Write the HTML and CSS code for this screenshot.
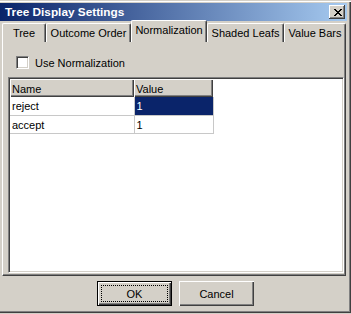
FILE: index.html
```html
<!DOCTYPE html>
<html>
<head>
<meta charset="utf-8">
<link rel="stylesheet" href="styles.css">
</head>
<body>
<div class="window">
  <div class="titlebar">
    <span class="title">Tree Display Settings</span>
    <div class="close">
      <svg width="8" height="7" viewBox="0 0 8 7" shape-rendering="crispEdges">
        <rect x="0" y="0" width="2" height="1" fill="#000"/>
        <rect x="6" y="0" width="2" height="1" fill="#000"/>
        <rect x="1" y="1" width="2" height="1" fill="#000"/>
        <rect x="5" y="1" width="2" height="1" fill="#000"/>
        <rect x="2" y="2" width="4" height="1" fill="#000"/>
        <rect x="3" y="3" width="2" height="1" fill="#000"/>
        <rect x="2" y="4" width="4" height="1" fill="#000"/>
        <rect x="1" y="5" width="2" height="1" fill="#000"/>
        <rect x="5" y="5" width="2" height="1" fill="#000"/>
        <rect x="0" y="6" width="2" height="1" fill="#000"/>
        <rect x="6" y="6" width="2" height="1" fill="#000"/>
      </svg>
    </div>
  </div>
  <div class="main">
    <div class="tabs">
      <div class="tab t-tree">Tree</div>
      <div class="tab t-outcome">Outcome Order</div>
      <div class="tab t-norm active">Normalization</div>
      <div class="tab t-shaded">Shaded Leafs</div>
      <div class="tab t-value">Value Bars</div>
    </div>
    <div class="panel">
      <div class="check"><span class="box"></span><span class="label">Use Normalization</span></div>
      <div class="scroll">
        <table class="grid">
          <colgroup><col class="c-name"><col class="c-value"></colgroup>
          <thead>
            <tr><th>Name</th><th>Value</th></tr>
          </thead>
          <tbody>
            <tr><td>reject</td><td class="sel">1</td></tr>
            <tr><td>accept</td><td>1</td></tr>
          </tbody>
        </table>
      </div>
    </div>
    <div class="buttons">
      <div class="btn default"><span class="focus">OK</span></div>
      <div class="btn">Cancel</div>
    </div>
  </div>
</div>
</body>
</html>
```
FILE: styles.css
```css
* { box-sizing: border-box; }
html, body { margin: 0; padding: 0; }
body {
  background: #d4d0c8;
  font-family: "Liberation Sans", Arial, sans-serif;
  font-size: 11px;
  color: #000;
  width: 351px;
  height: 314px;
  overflow: hidden;
}
.window {
  width: 351px;
  height: 313px;
  padding: 3px 4px 2px 0;
  display: flex;
  flex-direction: column;
  box-shadow: inset 0 1px #d4d0c8, inset 0 2px #ffffff, inset -1px -1px #404040, inset -2px -2px #808080;
}
.titlebar {
  height: 18px;
  flex: none;
  background: linear-gradient(to right, #0a246a, #a6caf0);
  display: flex;
  align-items: center;
  justify-content: space-between;
  padding: 0 2px 0 5px;
}
.title {
  color: #fff;
  font-weight: bold;
  font-size: 11.8px;
}
.close {
  width: 16px;
  height: 14px;
  background: #d4d0c8;
  box-shadow: inset -1px -1px #404040, inset 1px 1px #ffffff, inset -2px -2px #808080;
  display: flex;
  align-items: center;
  justify-content: center;
  padding-left: 1px;
}
.close svg { display: block; }
.main {
  flex: 1;
  display: flex;
  flex-direction: column;
  padding: 0 1px 0 2px;
}
.tabs {
  height: 21px;
  flex: none;
  display: flex;
  align-items: flex-end;
  position: relative;
  z-index: 1;
  margin-bottom: -1px;
}
.tab {
  height: 19px;
  display: flex;
  align-items: center;
  justify-content: center;
  padding-bottom: 1px;
  border-top: 1px solid #fff;
  border-left: 1px solid #fff;
  border-right: 1px solid #404040;
  box-shadow: inset -1px 0 #808080;
  border-radius: 2px 2px 0 0;
  background: #d4d0c8;
  white-space: nowrap;
}
.t-tree { width: 44px; }
.t-outcome { width: 85px; }
.t-norm { width: 76px; }
.t-shaded { width: 77px; }
.t-value { width: 62px; }
.tab.active {
  height: 22px;
  padding-bottom: 3px;
}
.panel {
  height: 235px;
  flex: none;
  border-top: 1px solid #fff;
  border-left: 1px solid #fff;
  border-right: 1px solid #404040;
  border-bottom: 1px solid #404040;
  box-shadow: inset -1px -1px #808080;
  padding: 14px 0 0 5px;
}
.check {
  display: flex;
  align-items: center;
  height: 13px;
  margin-left: 8px;
}
.box {
  width: 13px;
  height: 13px;
  background: #fff;
  border: 1px solid;
  border-color: #808080 #fff #fff #808080;
  box-shadow: inset 1px 1px #404040, inset -1px -1px #d4d0c8;
  margin-right: 6px;
}
.scroll {
  margin-top: 8px;
  width: 336px;
  height: 196px;
  background: #fff;
  border: 1px solid;
  border-color: #808080 #fff #fff #808080;
  box-shadow: inset 1px 1px #404040, inset -1px -1px #d4d0c8;
  padding: 1px;
}
.grid {
  border-collapse: collapse;
  table-layout: fixed;
  width: 203px;
}
.c-name { width: 124px; }
.c-value { width: 79px; }
.grid th {
  height: 18px;
  padding: 1px 0 0 2px;
  text-align: left;
  font-weight: normal;
  background: #d4d0c8;
  box-shadow: inset 1px 1px #fff, inset -1px -1px #404040, inset -2px -2px #808080;
}
.grid td {
  height: 18px;
  padding: 1px 0 0 2px;
  border-right: 1px solid #c8c8c8;
  border-bottom: 1px solid #c8c8c8;
}
.grid td.sel {
  background: #0a246a;
  color: #fff;
}
.buttons {
  display: flex;
  justify-content: center;
  gap: 7px;
  padding-left: 3px;
  margin-top: 5px;
}
.btn {
  width: 75px;
  height: 25px;
  display: flex;
  align-items: center;
  justify-content: center;
  background: #d4d0c8;
  box-shadow: inset 1px 1px #fff, inset -1px -1px #404040, inset -2px -2px #808080;
}
.btn.default {
  border: 1px solid #000;
  box-shadow: inset 1px 1px #fff, inset -1px -1px #404040, inset -2px -2px #808080;
  padding: 3px;
}
.focus {
  flex: 1;
  align-self: stretch;
  display: flex;
  align-items: center;
  justify-content: center;
  border: 1px dotted #000;
}
```
